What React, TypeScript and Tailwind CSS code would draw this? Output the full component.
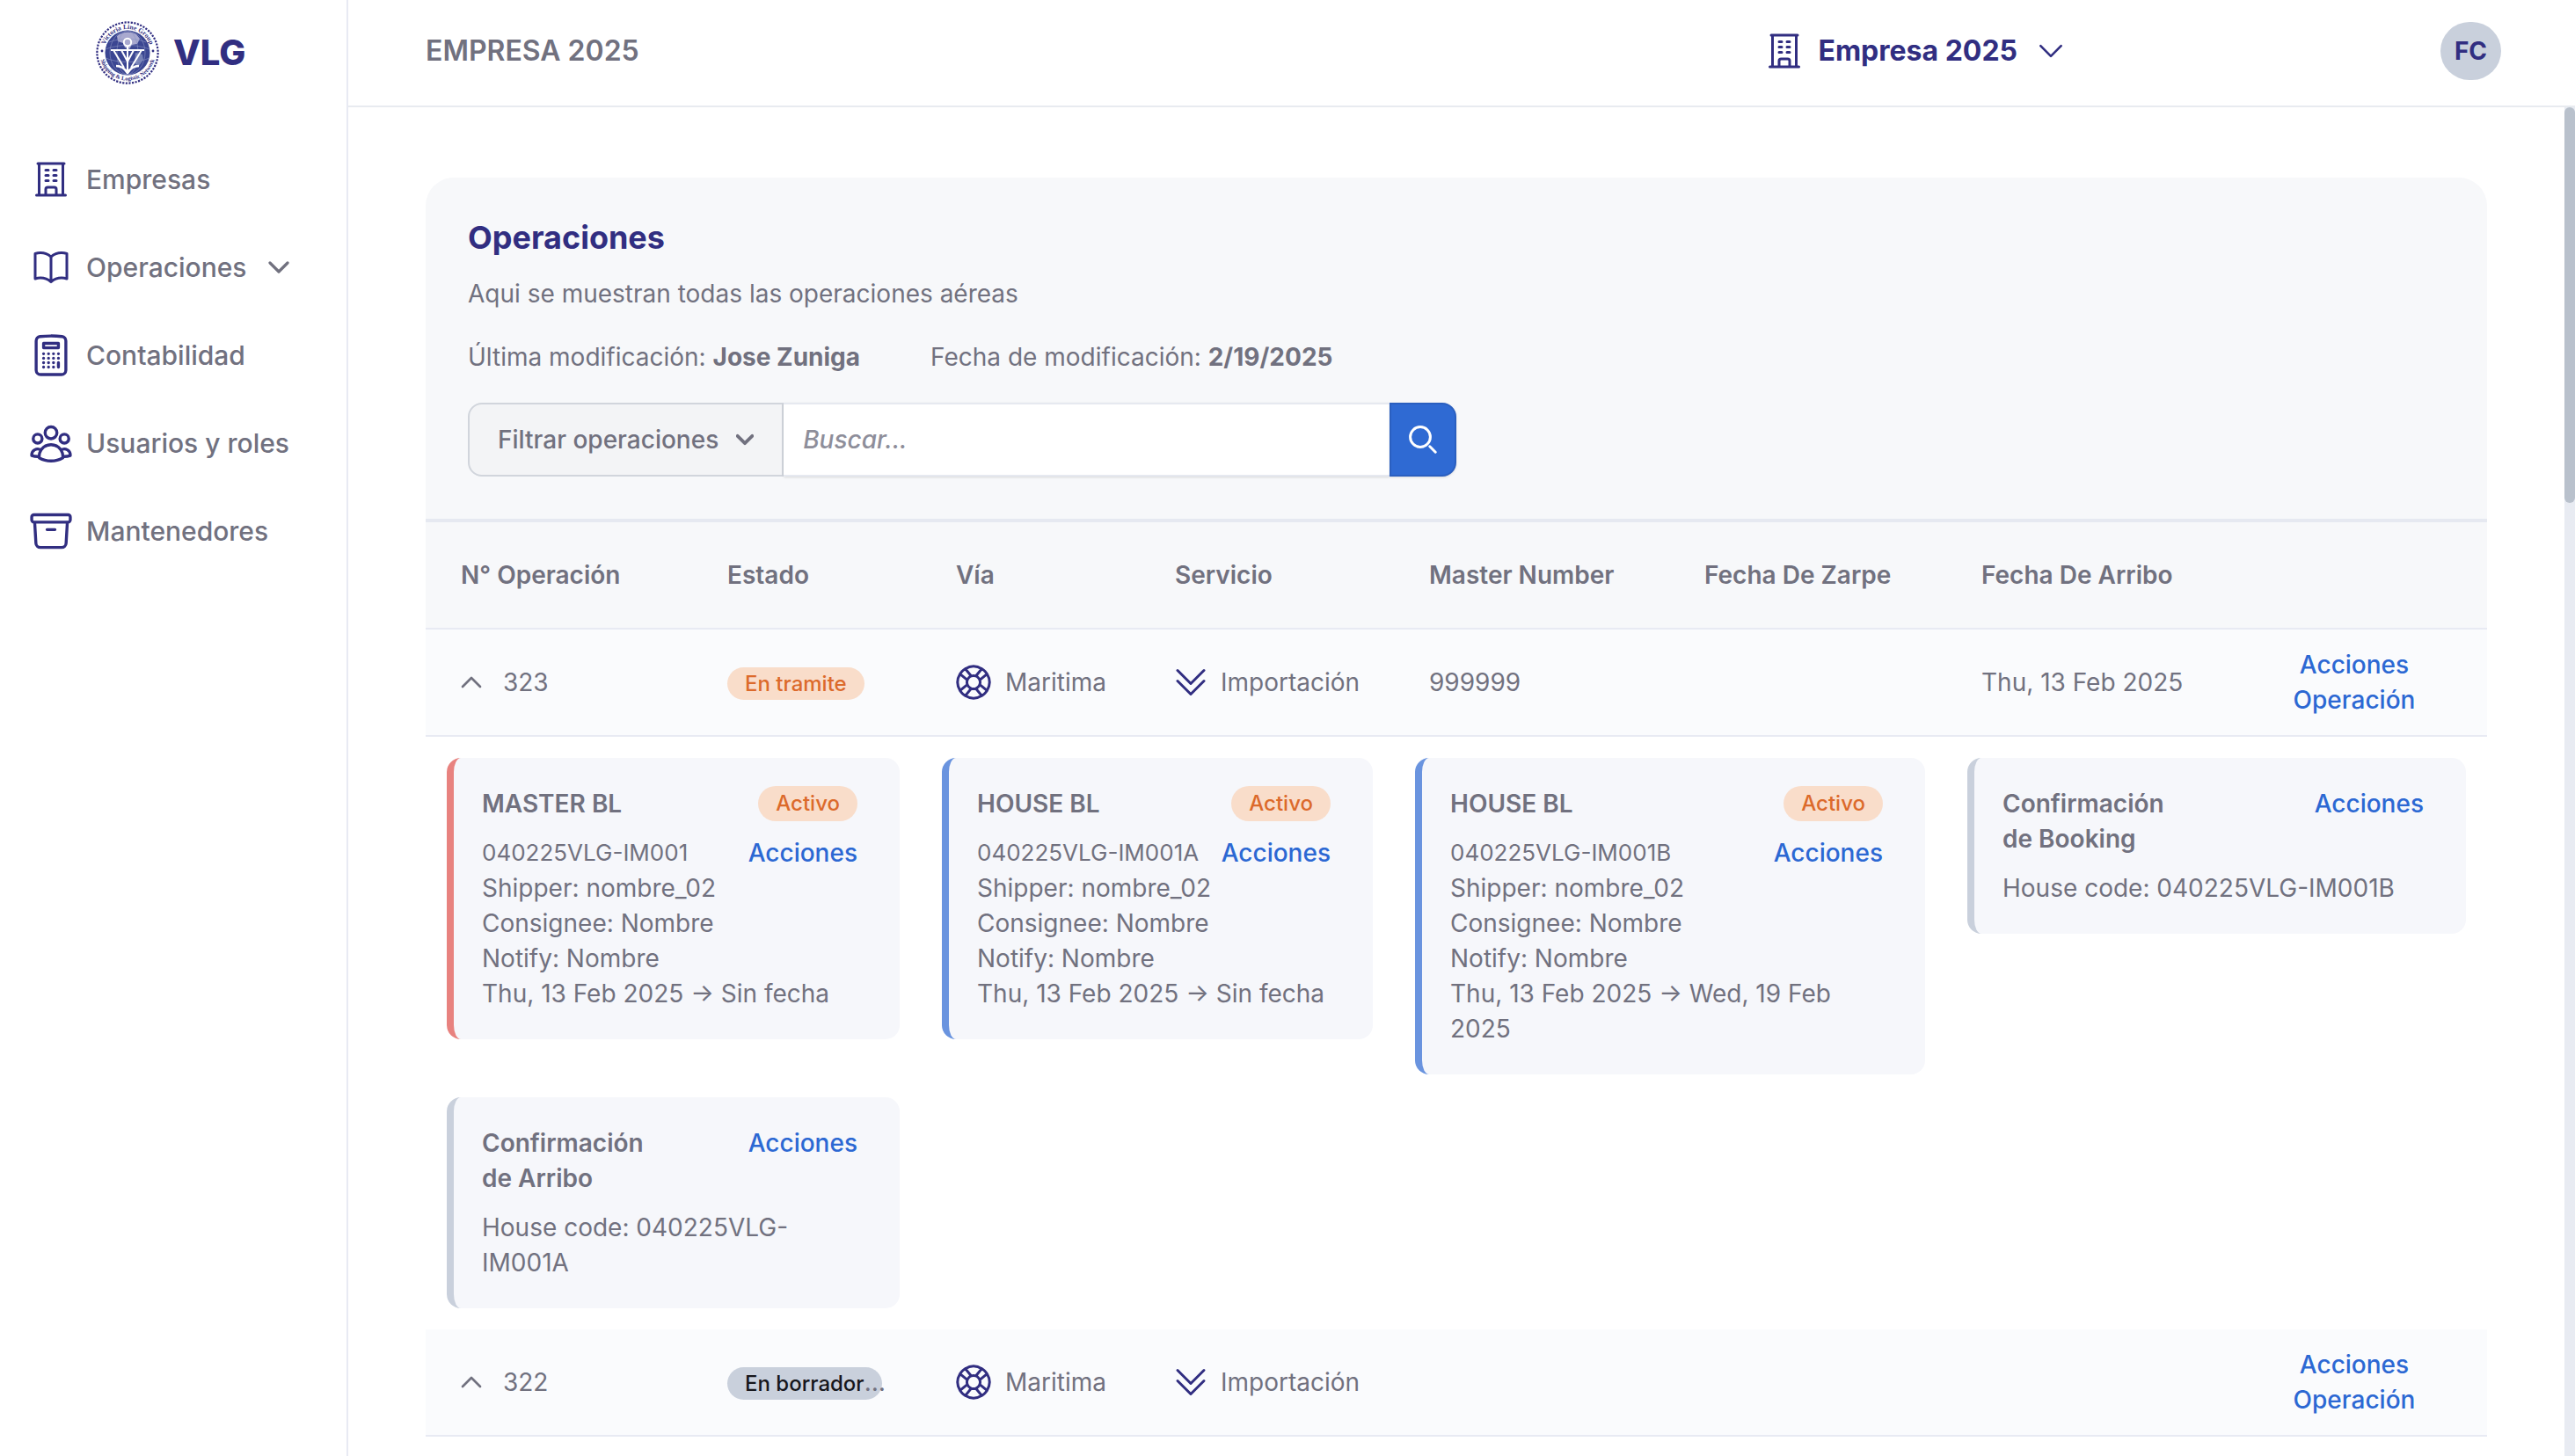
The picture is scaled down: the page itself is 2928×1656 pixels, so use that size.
import React from "react";
import type { ReactNode } from "react";

type IconProps = { d: string; className: string; box?: string; width?: number };

function Icon({ d, className, box = "0 0 24 24", width = 1.5 }: IconProps) {
  return (
    <svg
      viewBox={box}
      className={className}
      fill="none"
      stroke="currentColor"
      strokeWidth={width}
      strokeLinecap="round"
      strokeLinejoin="round"
      aria-hidden="true"
    >
      <path d={d} />
    </svg>
  );
}

const paths = {
  building:
    "M3.75 21h16.5M4.5 3h15M5.25 3v18m13.5-18v18M9 6.75h1.5m-1.5 3h1.5m-1.5 3h1.5m3-6H15m-1.5 3H15m-1.5 3H15M9 21v-3.375c0-.621.504-1.125 1.125-1.125h3.75c.621 0 1.125.504 1.125 1.125V21",
  book: "M12 6.042A8.967 8.967 0 0 0 6 3.75c-1.052 0-2.062.18-3 .512v14.25A8.987 8.987 0 0 1 6 18c2.305 0 4.408.867 6 2.292m0-14.25a8.966 8.966 0 0 1 6-2.292c1.052 0 2.062.18 3 .512v14.25A8.987 8.987 0 0 0 18 18a8.967 8.967 0 0 0-6 2.292m0-14.25v14.25",
  calculator:
    "M15.75 15.75V18m-7.5-6.75h.008v.008H8.25v-.008Zm0 2.25h.008v.008H8.25V13.5Zm0 2.25h.008v.008H8.25v-.008Zm0 2.25h.008v.008H8.25V18Zm2.498-6.75h.007v.008h-.007v-.008Zm0 2.25h.007v.008h-.007V13.5Zm0 2.25h.007v.008h-.007v-.008Zm0 2.25h.007v.008h-.007V18Zm2.504-6.75h.008v.008h-.008v-.008Zm0 2.25h.008v.008h-.008V13.5Zm0 2.25h.008v.008h-.008v-.008Zm0 2.25h.008v.008h-.008V18Zm2.498-6.75h.008v.008h-.008v-.008Zm0 2.25h.008v.008h-.008V13.5ZM8.25 6h7.5v2.25h-7.5V6ZM12 2.25c-1.892 0-3.758.11-5.593.322C5.307 2.7 4.5 3.65 4.5 4.757V19.5a2.25 2.25 0 0 0 2.25 2.25h10.5a2.25 2.25 0 0 0 2.25-2.25V4.757c0-1.108-.806-2.057-1.907-2.185A48.507 48.507 0 0 0 12 2.25Z",
  users:
    "M18 18.72a9.094 9.094 0 0 0 3.741-.479 3 3 0 0 0-4.682-2.72m.94 3.198.001.031c0 .225-.012.447-.037.666A11.944 11.944 0 0 1 12 21c-2.17 0-4.207-.576-5.963-1.584A6.062 6.062 0 0 1 6 18.719m12 0a5.971 5.971 0 0 0-.941-3.197m0 0A5.995 5.995 0 0 0 12 12.75a5.995 5.995 0 0 0-5.058 2.772m0 0a3 3 0 0 0-4.681 2.72 8.986 8.986 0 0 0 3.74.477m.94-3.197a5.971 5.971 0 0 0-.94 3.197M15 6.75a3 3 0 1 1-6 0 3 3 0 0 1 6 0Zm6 3a2.25 2.25 0 1 1-4.5 0 2.25 2.25 0 0 1 4.5 0Zm-13.5 0a2.25 2.25 0 1 1-4.5 0 2.25 2.25 0 0 1 4.5 0Z",
  archive:
    "m20.25 7.5-.625 10.632a2.25 2.25 0 0 1-2.247 2.118H6.622a2.25 2.25 0 0 1-2.247-2.118L3.75 7.5M10 11.25h4M3.375 7.5h17.25c.621 0 1.125-.504 1.125-1.125v-1.5c0-.621-.504-1.125-1.125-1.125H3.375c-.621 0-1.125.504-1.125 1.125v1.5c0 .621.504 1.125 1.125 1.125Z",
  lifebuoy:
    "M16.712 4.33a9.027 9.027 0 0 1 1.652 1.306c.51.51.944 1.064 1.306 1.652M16.712 4.33l-3.448 4.138m3.448-4.138a9.014 9.014 0 0 0-9.424 0M19.67 7.288l-4.138 3.448m4.138-3.448a9.014 9.014 0 0 1 0 9.424m-4.138-5.976a3.736 3.736 0 0 0-.88-1.388 3.737 3.737 0 0 0-1.388-.88m2.268 2.268a3.765 3.765 0 0 1 0 2.528m-2.268-4.796a3.765 3.765 0 0 0-2.528 0m4.796 4.796c-.181.506-.475.982-.88 1.388a3.736 3.736 0 0 1-1.388.88m2.268-2.268 4.138 3.448m0 0a9.027 9.027 0 0 1-1.306 1.652c-.51.51-1.064.944-1.652 1.306m0 0-3.448-4.138m3.448 4.138a9.014 9.014 0 0 1-9.424 0m5.976-4.138a3.765 3.765 0 0 1-2.528 0m0 0a3.736 3.736 0 0 1-1.388-.88 3.737 3.737 0 0 1-.88-1.388m2.268 2.268L7.288 19.67m0 0a9.024 9.024 0 0 1-1.652-1.306 9.027 9.027 0 0 1-1.306-1.652m0 0 4.138-3.448M4.33 16.712a9.014 9.014 0 0 1 0-9.424m4.138 5.976a3.765 3.765 0 0 1 0-2.528m0 0c.181-.506.475-.982.88-1.388a3.736 3.736 0 0 1 1.388-.88m-2.268 2.268L4.33 7.288m6.406 1.18L7.288 4.33m0 0a9.024 9.024 0 0 0-1.652 1.306A9.025 9.025 0 0 0 4.33 7.288",
  doubleDown: "m4.5 5.25 7.5 7.5 7.5-7.5m-15 6 7.5 7.5 7.5-7.5",
  down: "m4.5 8.25 7.5 7.5 7.5-7.5",
  up: "m4.5 15.75 7.5-7.5 7.5 7.5",
};

function Logo() {
  return (
    <svg viewBox="0 0 72 72" className="size-18" role="img" aria-label="Victoria Line Group">
      <defs>
        <path id="ring-top" d="M9 36a27 27 0 0 1 54 0" />
        <path id="ring-bottom" d="M4.5 36a31.5 31.5 0 0 0 63 0" />
      </defs>
      <circle cx="36" cy="36" r="34.6" fill="none" stroke="#312e81" strokeWidth="2.2" strokeDasharray="2.2 1.42" />
      <circle cx="36" cy="36" r="25.5" fill="#3b4692" />
      <path d="M24 17c6-5 15-6 22-2l4 5-3 6-6 1-3 5-5-2-2-5-6-2z" fill="#a9a9cf" />
      <path d="M45 36l8 2 1 6-5 7-5-3z" fill="#7580b5" />
      <g fill="none" stroke="#8b93c2" strokeWidth="0.6">
        <ellipse cx="36" cy="36" rx="12" ry="25" />
        <ellipse cx="36" cy="36" rx="20" ry="25" />
        <path d="M11 32c14-6 36-6 50 0M11 42c14 6 36 6 50 0M15 24c12-5 30-5 42 0" />
      </g>
      <g fill="none" stroke="#fff" strokeWidth="2.6" strokeLinejoin="round">
        <circle cx="36" cy="24" r="4.2" strokeWidth="2" />
        <path d="M17 33h38M20 33l12 20M29 33l7 13 7-13M52 33L40 53M36 29v28" strokeWidth="2" />
        <path d="M23 51c5 0 10 3 13 8 3-5 8-8 13-8" />
      </g>
      <g fill="#312e81" fontSize="7.6" fontWeight="700" className="font-['Liberation_Serif',serif]">
        <text>
          <textPath href="#ring-top" startOffset="50%" textAnchor="middle">
            Victoria Line Group
          </textPath>
        </text>
        <text fontSize="6.6">
          <textPath href="#ring-bottom" startOffset="50%" textAnchor="middle">
            Shipping &amp; Logistic Network
          </textPath>
        </text>
      </g>
      <circle cx="7" cy="34" r="1.4" fill="#312e81" />
      <circle cx="65" cy="34" r="1.4" fill="#312e81" />
    </svg>
  );
}

const nav = [
  { label: "Empresas", d: paths.building, size: "size-12", open: false },
  { label: "Operaciones", d: paths.book, size: "size-12", open: true },
  { label: "Contabilidad", d: paths.calculator, size: "size-[54px]", open: false },
  { label: "Usuarios y roles", d: paths.users, size: "size-[54px]", open: false },
  { label: "Mantenedores", d: paths.archive, size: "size-[54px]", open: false },
];

function Sidebar() {
  return (
    <aside className="w-[396px] shrink-0 border-r-2 border-[#e8eaf3]">
      <div className="flex h-[120px] items-center gap-4 pl-[109px]">
        <Logo />
        <span className="text-[40px] font-extrabold text-[#312e81]">VLG</span>
      </div>
      <nav className="mt-10 flex flex-col gap-3 pl-[30px]">
        {nav.map((item) => (
          <a key={item.label} href="#" className="flex h-22 items-center gap-3 text-[30px] font-medium">
            <span className="flex w-14 justify-center text-[#312e81]">
              <Icon d={item.d} className={item.size} />
            </span>
            {item.label}
            {item.open && <Icon d={paths.down} box="3 3 18 18" width={2.4} className="ml-3 size-6" />}
          </a>
        ))}
      </nav>
    </aside>
  );
}

function Header() {
  return (
    <header className="flex h-[122px] shrink-0 items-center border-b-2 border-[#e8ebf0] pr-[84px] pb-1 pl-22">
      <h1 className="flex-1 text-[32px] font-semibold">EMPRESA 2025</h1>
      <button type="button" className="mr-[429px] flex items-center gap-3.5 text-[32px] font-bold text-[#312e81]">
        <Icon d={paths.building} className="size-12" />
        Empresa 2025
        <Icon d={paths.down} box="3 3 18 18" width={1.7} className="ml-2.5 size-7" />
      </button>
      <button
        type="button"
        className="flex h-[66px] w-[69px] items-center justify-center rounded-full bg-[#c9d0dc] text-[28px] font-bold text-[#312e81]"
      >
        FC
      </button>
    </header>
  );
}

function Acciones() {
  return (
    <button type="button" className="shrink-0 font-medium text-[#2c68d3]">
      Acciones
    </button>
  );
}

function Active() {
  return <span className="rounded-full bg-[#f9ddca] px-5 py-1 text-2xl font-medium text-[#dc6a2b]">Activo</span>;
}

function BlCard({ title, code, dates, edge }: { title: string; code: string; dates: string; edge: string }) {
  return (
    <td colSpan={2} className="px-6 pt-6 pb-0.5 align-top">
      <article className={"rounded-2xl border-l-8 bg-[#f6f7fb] py-8 pr-12 pl-8 " + edge}>
        <div className="mb-4 flex items-center justify-between">
          <h3 className="font-semibold">{title}</h3>
          <Active />
        </div>
        <div className="flex justify-between whitespace-nowrap">
          <span className="text-[26px]">{code}</span>
          <Acciones />
        </div>
        <p>Shipper: nombre_02</p>
        <p>Consignee: Nombre</p>
        <p>Notify: Nombre</p>
        <p>{dates}</p>
      </article>
    </td>
  );
}

function ConfirmationCard({ kind, code }: { kind: string; code: string }) {
  return (
    <td colSpan={2} className="p-6 align-top">
      <article className="rounded-2xl border-l-8 border-[#c9d0dc] bg-[#f6f7fb] py-8 pr-12 pl-8">
        <div className="mb-4 flex items-start justify-between">
          <h3 className="font-semibold">
            Confirmación
            <br />
            {`de ${kind}`}
          </h3>
          <Acciones />
        </div>
        <p>{`House code: ${code}`}</p>
      </article>
    </td>
  );
}

type RowProps = { id: string; status: ReactNode; master?: string; arrival?: string };

function OperationRow({ id, status, master, arrival }: RowProps) {
  return (
    <tr className="h-[122px] bg-[#fafbfd] *:border-b-2 *:border-[#e8eaf3]">
      <td className="pl-10">
        <button type="button" className="flex items-center gap-6">
          <Icon d={paths.up} box="3 3 18 18" width={2} className="size-6" />
          {id}
        </button>
      </td>
      <td className="pl-10 whitespace-nowrap">{status}</td>
      <td className="pl-10">
        <span className="flex items-center gap-4">
          <Icon d={paths.lifebuoy} box="2 2 20 20" className="size-10 text-[#312e81]" />
          Maritima
        </span>
      </td>
      <td className="pl-10">
        <span className="flex items-center gap-4">
          <Icon d={paths.doubleDown} box="3 3 18 18" className="size-9 text-[#312e81]" />
          Importación
        </span>
      </td>
      <td className="pl-10">{master}</td>
      <td className="pl-10" />
      <td className="pl-10">{arrival}</td>
      <td className="text-center">
        <button type="button" className="font-medium text-[#2c68d3]">
          Acciones
          <br />
          Operación
        </button>
      </td>
    </tr>
  );
}

const headings = ["N° Operación", "Estado", "Vía", "Servicio", "Master Number", "Fecha De Zarpe", "Fecha De Arribo", ""];

function OperationsTable() {
  return (
    <table className="w-full table-fixed border-separate border-spacing-0 text-left">
      <colgroup>
        <col className="w-[303px]" />
        <col className="w-[260px]" />
        <col className="w-[249px]" />
        <col className="w-[289px]" />
        <col className="w-[313px]" />
        <col className="w-[315px]" />
        <col className="w-[313px]" />
        <col className="w-[302px]" />
      </colgroup>
      <thead>
        <tr className="h-[122px] bg-[#f7f8fa] *:border-b-2 *:border-[#e8eaf3]">
          {headings.map((h) => (
            <th key={h} className="pl-10 font-semibold">
              {h}
            </th>
          ))}
        </tr>
      </thead>
      <tbody>
        <OperationRow
          id="323"
          master="999999"
          arrival="Thu, 13 Feb 2025"
          status={
            <span className="rounded-full bg-[#f9ddca] px-5 py-1 text-2xl font-medium text-[#dc6a2b]">En tramite</span>
          }
        />
        <tr>
          <BlCard title="MASTER BL" code="040225VLG-IM001" dates="Thu, 13 Feb 2025 → Sin fecha" edge="border-[#e8827f]" />
          <BlCard title="HOUSE BL" code="040225VLG-IM001A" dates="Thu, 13 Feb 2025 → Sin fecha" edge="border-[#6a94df]" />
          <BlCard
            title="HOUSE BL"
            code="040225VLG-IM001B"
            dates="Thu, 13 Feb 2025 → Wed, 19 Feb 2025"
            edge="border-[#6a94df]"
          />
          <ConfirmationCard kind="Booking" code="040225VLG-IM001B" />
        </tr>
        <tr>
          <ConfirmationCard kind="Arribo" code="040225VLG-IM001A" />
        </tr>
        <OperationRow
          id="322"
          status={
            <>
              <span className="rounded-full bg-[#c9d0dc] px-5 py-1 text-2xl font-medium text-[#17171c]">En borrador</span>
              <span className="-ml-5">…</span>
            </>
          }
        />
      </tbody>
    </table>
  );
}

function Search() {
  return (
    <form className="flex h-21 w-[1124px]" onSubmit={(e) => e.preventDefault()}>
      <button
        type="button"
        className="flex items-center gap-5 rounded-l-2xl border-2 border-gray-300 bg-gray-100 px-8 font-medium whitespace-nowrap"
      >
        Filtrar operaciones
        <Icon d={paths.down} box="3 3 18 18" width={3.4} className="size-5" />
      </button>
      <input
        type="search"
        aria-label="Buscar"
        placeholder="Buscar..."
        className="min-w-0 flex-1 border-y-2 border-[#e6e9f0] bg-white px-[22px] font-medium shadow-sm placeholder:text-[#8e8e9a] placeholder:italic"
      />
      <button
        type="submit"
        aria-label="Buscar"
        className="flex w-19 items-center justify-center rounded-r-2xl border-2 border-[#2a5fc0] bg-[#2f6ad3] text-white shadow-sm"
      >
        <svg viewBox="0 0 32 32" className="size-8" fill="none" stroke="currentColor" strokeWidth="3" strokeLinecap="round">
          <circle cx="13" cy="13" r="11.4" />
          <path d="M23.8 23.8l6.4 6.4" />
        </svg>
      </button>
    </form>
  );
}

export default function App() {
  return (
    <div className="flex h-screen overflow-hidden bg-white font-['Inter',sans-serif] text-[28px] leading-10 text-[#71717f]">
      <Sidebar />
      <div className="flex min-w-0 flex-1 flex-col">
        <Header />
        <div className="flex min-h-0 flex-1">
          <main className="min-w-0 flex-1 overflow-hidden px-22 pt-20">
            <section className="overflow-hidden rounded-t-[32px]">
              <div className="border-b-4 border-[#e6e9f1] bg-[#f7f8fa] px-12 pt-10 pb-12">
                <h2 className="text-4xl leading-14 font-bold text-[#312e81]">Operaciones</h2>
                <p className="mt-4">Aqui se muestran todas las operaciones aéreas</p>
                <div className="mt-8 mb-8 flex gap-20">
                  <p>
                    Última modificación: <strong>Jose Zuniga</strong>
                  </p>
                  <p>
                    Fecha de modificación: <strong>2/19/2025</strong>
                  </p>
                </div>
                <Search />
              </div>
              <OperationsTable />
            </section>
          </main>
          <div className="w-3 shrink-0 bg-[#e8ebf2]">
            <div className="h-[450px] rounded-full bg-[#b9c1cc]" />
          </div>
        </div>
      </div>
    </div>
  );
}
